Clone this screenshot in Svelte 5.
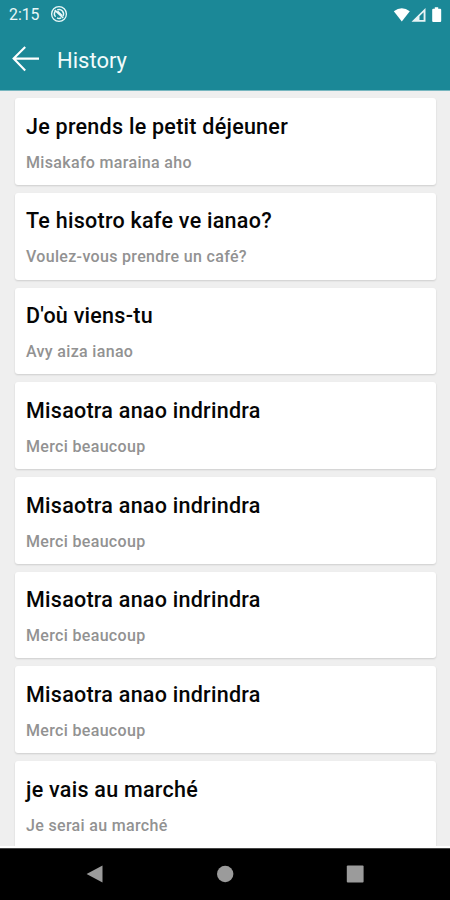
<script>
  const history = [
    ['Je prends le petit déjeuner', 'Misakafo maraina aho'],
    ['Te hisotro kafe ve ianao?', 'Voulez-vous prendre un café?'],
    ["D'où viens-tu", 'Avy aiza ianao'],
    ['Misaotra anao indrindra', 'Merci beaucoup'],
    ['Misaotra anao indrindra', 'Merci beaucoup'],
    ['Misaotra anao indrindra', 'Merci beaucoup'],
    ['Misaotra anao indrindra', 'Merci beaucoup'],
    ['je vais au marché', 'Je serai au marché']
  ];
</script>

<div class="screen">
  <div class="status">
    <span class="time">2:15</span>
    <svg class="sync" width="18" height="18" viewBox="0 0 18 18" fill="none" stroke="#e9f8f8">
      <circle cx="9" cy="9" r="7.4" stroke-width="1.3" />
      <path d="M5.6 11.8A4.5 4.5 0 0 1 5.5 6M7.2 4.9A4.5 4.5 0 0 1 12.8 11.4M11.2 12.9A4.5 4.5 0 0 1 7 12.8" stroke-width="1.5" />
      <path d="M4.8 5.2L13.2 13M7.5 6.2L12 10.5" stroke-width="1.6" />
    </svg>
    <svg class="signals" width="50" height="18" viewBox="0 0 50 18" fill="#fff">
      <path d="M.8 5.2Q8.8-.8 16.8 5.2L8.8 15.5Z" />
      <path fill-rule="evenodd" d="M18.5 15.8L32.5 2V15.8ZM26.5 10.2V14H30.6V6.2Z" opacity=".9" />
      <path d="M41.8 1.2H45.2V2.7H47.2Q48.2 2.7 48.2 3.7V15Q48.2 16 47.2 16H40.2Q39.2 16 39.2 15V3.7Q39.2 2.7 40.2 2.7H41.8Z" />
    </svg>
  </div>
  <header>
    <svg width="28" height="26" viewBox="0 0 28 26" fill="none" stroke="#fff" stroke-width="2.1">
      <path d="M27 12.6H2M13.2 .9L1.6 12.6L13.2 24.5" />
    </svg>
    <h1>History</h1>
  </header>
  <main>
    {#each history as [phrase, translation]}
      <article>
        <h2>{phrase}</h2>
        <p>{translation}</p>
      </article>
    {/each}
  </main>
  <nav>
    <svg width="18" height="20" viewBox="0 0 18 20"><path d="M.6 10L16.5 1.5V18.5Z" /></svg>
    <svg width="18" height="20" viewBox="0 0 18 20"><circle cx="9.2" cy="10" r="8.2" /></svg>
    <svg width="18" height="20" viewBox="0 0 18 20"><rect x=".8" y="1.6" width="16.8" height="17" rx="1" /></svg>
  </nav>
</div>

<style>
  .screen {
    width: 450px;
    height: 900px;
    overflow: hidden;
    display: flex;
    flex-direction: column;
    background: #efefef;
    font-family: Roboto, "Liberation Sans", sans-serif;
  }
  .status {
    flex: none;
    height: 28px;
    box-sizing: border-box;
    padding: 0 7px 0 9px;
    display: flex;
    align-items: center;
    background: #1b8897;
    color: #e9f8f8;
  }
  .time { font-size: 15.8px; line-height: 28px; letter-spacing: 0; padding-top: 1px; }
  .sync { margin-left: 11px; }
  .signals { margin-left: auto; margin-top: 1px; }
  header {
    flex: none;
    height: 63px;
    box-sizing: border-box;
    border-bottom: 1px solid #77b6bf;
    padding: 0 12px 0;
    display: flex;
    align-items: center;
    background: #1b8897;
    color: #f2fbfb;
  }
  h1 { margin: 3px 0 0 17px; font-size: 22px; font-weight: 400; line-height: 28px; }
  main {
    flex: none;
    height: 755px;
    box-sizing: border-box;
    padding: 7.2px 14px 0 15px;
    overflow: hidden;
    display: flex;
    flex-direction: column;
    gap: 8px;
  }
  article {
    flex: none;
    height: 86.7px;
    box-sizing: border-box;
    padding: 14.6px 11px 0;
    border-radius: 3px;
    background: #fff;
    box-shadow: 0 1px 2px rgba(0, 0, 0, 0.14);
  }
  h2 { margin: 0; font-size: 21.5px; line-height: 28px; font-weight: 500; color: #050505; letter-spacing: 0.26px; white-space: nowrap; }
  p { margin: 11px 0 0; font-size: 16px; line-height: 22px; font-weight: 500; color: #929292; letter-spacing: 0.33px; white-space: nowrap; }
  nav {
    flex: 1;
    border-top: 2px solid #fff;
    box-shadow: inset 0 1px #444;
    background: #000;
    display: flex;
    justify-content: center;
    align-items: center;
    gap: 112px;
  }
  nav svg { fill: #9b9b9b; }
</style>
